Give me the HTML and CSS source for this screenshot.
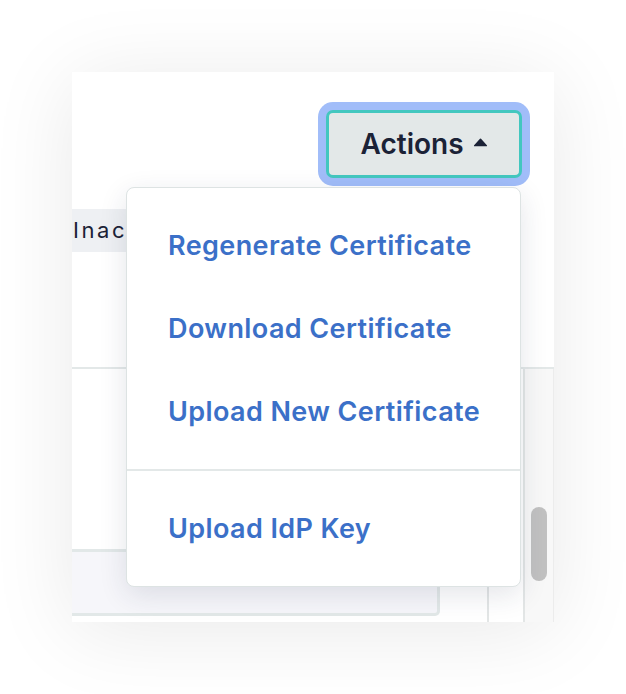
FILE: index.html
```html
<!DOCTYPE html>
<html lang="en">
<head>
<meta charset="utf-8">
<title>Actions menu</title>
<link rel="stylesheet" href="styles.css">
</head>
<body>
<div class="stage">
  <div class="panel">
    <div class="top">
      <div class="toolbar">
        <div class="actions-wrap">
          <button class="actions" type="button">
            <span>Actions</span>
            <svg class="caret" viewBox="0 0 16 10" width="15" height="9" aria-hidden="true"><path d="M8 1.5 L14.5 8.5 H1.5 Z" fill="currentColor" stroke="currentColor" stroke-width="1.6" stroke-linejoin="round"/></svg>
          </button>
          <div class="menu">
            <div class="menu-section">
              <a class="menu-item">Regenerate Certificate</a>
              <a class="menu-item">Download Certificate</a>
              <a class="menu-item">Upload New Certificate</a>
            </div>
            <div class="menu-section">
              <a class="menu-item">Upload IdP Key</a>
            </div>
          </div>
        </div>
      </div>
      <div class="status-row"><span class="badge">Inactive</span></div>
    </div>
    <div class="bottom">
      <div class="content">
        <div class="content-inner">
          <div class="field"></div>
        </div>
      </div>
      <div class="scrollbar"><div class="thumb"></div></div>
    </div>
  </div>
</div>
</body>
</html>
```

FILE: styles.css
```css
* { box-sizing: border-box; }
html, body { margin: 0; padding: 0; background: #ffffff; }
body {
  font-family: Inter, "Noto Sans", "Liberation Sans", sans-serif;
  width: 626px;
  height: 694px;
  overflow: hidden;
}
.stage {
  padding: 72px 0 0 72px;
}
.panel {
  width: 482px;
  height: 550px;
  background: #ffffff;
  box-shadow: 0 8px 80px rgba(0, 0, 0, 0.09);
  display: flex;
  flex-direction: column;
}
.top {
  height: 297px;
  border-bottom: 2px solid #e3e8e8;
  flex: none;
}
.toolbar {
  display: flex;
  justify-content: flex-end;
  padding: 38px 32px 0 0;
}
.actions-wrap {
  position: relative;
}
.actions {
  width: 196px;
  height: 68px;
  border: 3px solid #43c7bf;
  border-radius: 7px;
  background: #e3e8e8;
  box-shadow: 0 0 0 8px #a1bdf9;
  color: #1b2236;
  font-family: Inter, "Noto Sans", "Liberation Sans", sans-serif;
  font-size: 28px;
  font-weight: 600;
  letter-spacing: 0;
  display: flex;
  align-items: center;
  justify-content: center;
  gap: 9px;
  padding: 0;
}
.caret {
  display: block;
  margin-top: -3px;
}
.status-row {
  margin-top: 31px;
  display: flex;
}
.badge {
  height: 43px;
  background: #eef0f3;
  color: #1b2236;
  font-size: 22px;
  letter-spacing: 2.6px;
  line-height: 43px;
  padding: 0 10px 0 1px;
}
.menu {
  position: absolute;
  top: calc(100% + 9px);
  right: 1px;
  width: 395px;
  height: 400px;
  background: #ffffff;
  border: 1px solid #dde3e3;
  border-radius: 8px;
  box-shadow: 0 8px 28px rgba(30, 40, 70, 0.12);
  z-index: 5;
}
.menu-section {
  padding: 16px 0;
  display: flex;
  flex-direction: column;
}
.menu-section + .menu-section {
  border-top: 2px solid #e3e8e8;
}
.menu-item {
  display: block;
  height: 83px;
  line-height: 83px;
  padding-left: 41px;
  color: #3b70c8;
  font-size: 27px;
  font-weight: 600;
  letter-spacing: 0.4px;
  white-space: nowrap;
}
.bottom {
  flex: 1;
  display: flex;
  min-height: 0;
}
.content {
  flex: 1;
}
.content-inner {
  width: 417px;
  height: 100%;
  border-right: 2px solid #e3e6e6;
  display: flex;
  flex-direction: column;
  justify-content: flex-end;
  padding-bottom: 6px;
}
.field {
  width: 368px;
  height: 67px;
  background: #f6f6fa;
  border-top: 3px solid #e2e8e8;
  border-bottom: 3px solid #e2e8e8;
  border-right: 3px solid #e2e8e8;
  border-bottom-right-radius: 5px;
}
.scrollbar {
  width: 31px;
  flex: none;
  background: #f8f8f8;
  border-left: 2px solid #e3e6e6;
  border-right: 1px solid #ececec;
  padding-top: 138px;
}
.thumb {
  width: 16px;
  height: 74px;
  margin: 0 auto;
  border-radius: 8px;
  background: #c1c1c1;
}
```
